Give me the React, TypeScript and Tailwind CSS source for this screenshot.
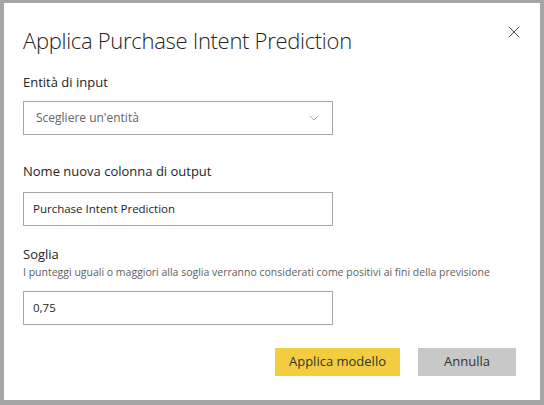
import { X, ChevronDown } from 'lucide-react'

const FONT = "font-['Open_Sans','Noto_Sans',sans-serif]"

function Field({ label, children }: { label: string; children: React.ReactNode }) {
  return (
    <div className="flex flex-col">
      <label className="text-[13px] leading-[20px] text-[#252423]">{label}</label>
      {children}
    </div>
  )
}

export default function App() {
  return (
    <div className={`${FONT} w-[544px] h-[405px] bg-white border-[#a6a6a6] border-t-[3px] border-x-4 border-b-[5px] relative`}>
      <button className="absolute right-[16px] top-[19px] text-[#333]">
        <X size={20} strokeWidth={1.1} />
      </button>

      <div className="pl-[19px] pt-[22px] flex flex-col">
        <h1 className="text-[22px] leading-[30px] font-light text-[#252423] tracking-[-0.3px]">
          Applica Purchase Intent Prediction
        </h1>

        <div className="mt-[17px]">
          <Field label="Entità di input">
            <div className="mt-[9px] w-[310px] h-[34px] border border-[#a6a6a6] flex items-center justify-between pl-[12px] pr-[10px]">
              <span className="text-[12px] text-[#666]">Scegliere un'entità</span>
              <ChevronDown size={16} strokeWidth={1} className="text-[#777]" />
            </div>
          </Field>
        </div>

        <div className="mt-[26px]">
          <Field label="Nome nuova colonna di output">
            <div className="mt-[11px] w-[310px] h-[34px] border border-[#a6a6a6] flex items-center pl-[9px]">
              <span className="text-[11.5px] text-[#252423]">Purchase Intent Prediction</span>
            </div>
          </Field>
        </div>

        <div className="mt-[18px]">
          <Field label="Soglia">
            <p className="text-[10.5px] leading-[14px] text-[#605e5c] mt-[1px]">
              I punteggi uguali o maggiori alla soglia verranno considerati come positivi ai fini della previsione
            </p>
            <div className="mt-[12px] w-[310px] h-[34px] border border-[#a6a6a6] flex items-center pl-[9px]">
              <span className="text-[11.5px] text-[#252423]">0,75</span>
            </div>
          </Field>
        </div>

        <div className="mt-[23px] flex justify-end gap-[18px] pr-[24px]">
          <button className="w-[125px] h-[28px] bg-[#f2cd3f] text-[13px] text-[#333]">Applica modello</button>
          <button className="w-[98px] h-[28px] bg-[#c8c8c8] text-[13px] text-[#333]">Annulla</button>
        </div>
      </div>
    </div>
  )
}
